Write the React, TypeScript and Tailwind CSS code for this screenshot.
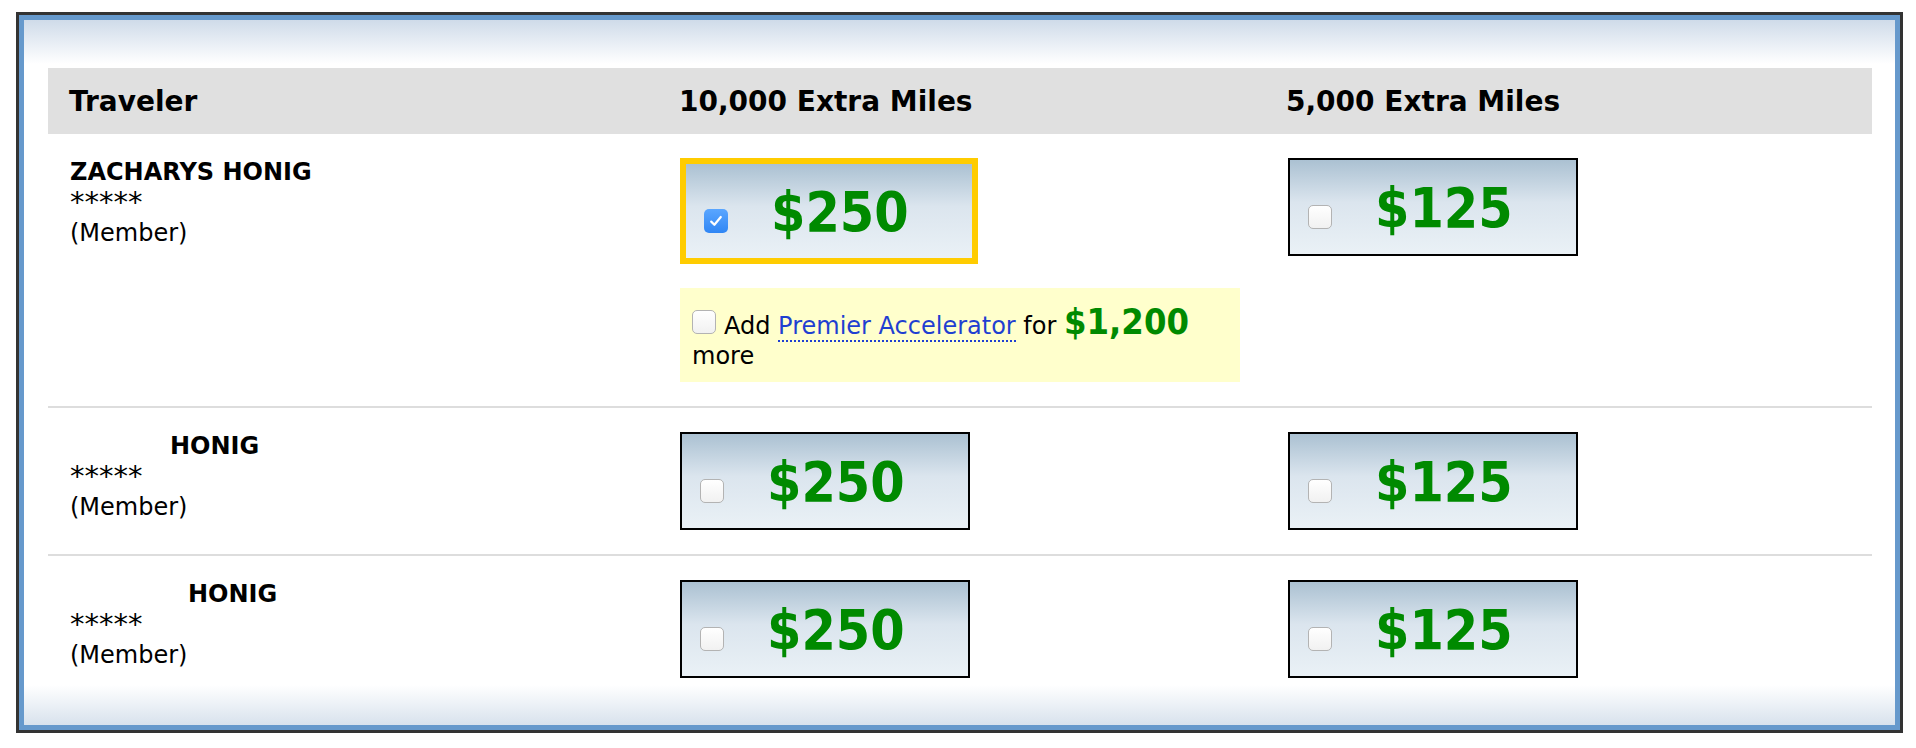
import React from 'react'

type Traveler = {
  name: string
  indent: string
  selected: '10k' | '5k' | null
  accelerator: boolean
}

const travelers: Traveler[] = [
  { name: 'ZACHARYS HONIG', indent: '', selected: '10k', accelerator: true },
  { name: 'HONIG', indent: 'pl-[100px]', selected: null, accelerator: false },
  { name: 'HONIG', indent: 'pl-[118px]', selected: null, accelerator: false },
]

function Checkbox({ checked }: { checked?: boolean }) {
  if (checked) {
    return (
      <span className="inline-flex items-center justify-center w-[24px] h-[24px] rounded-[5px] bg-linear-to-b from-[#5aa6ff] to-[#2f86f4] shrink-0">
        <svg width="16" height="16" viewBox="0 0 16 16" fill="none">
          <path d="M3.2 8.6 L6.4 11.8 L12.8 4" stroke="white" strokeWidth="2.2" strokeLinecap="round" strokeLinejoin="round" />
        </svg>
      </span>
    )
  }
  return (
    <span className="inline-block w-[24px] h-[24px] rounded-[5px] border border-[#b3b3b3] bg-linear-to-b from-white to-[#f1f1f1] shrink-0" />
  )
}

function PriceBox({ amount, selected }: { amount: string; selected: boolean }) {
  return (
    <div
      className={
        selected
          ? 'box-border w-[298px] h-[106px] border-[6px] border-[#ffcc00] flex items-start pl-[18px] bg-linear-to-b from-[#abc1d2] via-[#dbe5ee] via-45% to-[#eaf1f6]'
          : 'box-border w-[290px] h-[98px] border-2 border-black flex items-start pl-[18px] bg-linear-to-b from-[#abc1d2] via-[#dbe5ee] via-45% to-[#eaf1f6]'
      }
    >
      <span className="mt-[45px]">
        <Checkbox checked={selected} />
      </span>
      <span className="ml-[43px] mt-[22px] text-[55px] leading-[52px] font-bold font-stretch-condensed text-[#008a00]">
        {amount}
      </span>
    </div>
  )
}

export default function App() {
  return (
    <div className="w-[1916px] h-[748px] bg-white pt-[12px] pl-[16px] font-['DejaVu_Sans',sans-serif] text-black">
      <div className="box-border w-[1887px] h-[721px] border-[3px] border-[#333333]">
        <div className="box-border h-full border-[5px] border-[#6699cc] bg-[linear-gradient(to_bottom,#cfdbe9_0px,#ffffff_44px,#ffffff_calc(100%-40px),#d8e2ed_100%)] pt-[48px] pl-[24px] pr-[23px]">
          <div className="grid grid-cols-3 h-[66px] bg-[#e0e0e0] text-[28px] leading-[28px] font-bold">
            <div className="pl-[21px] pt-[20px]">Traveler</div>
            <div className="pl-[23px] pt-[20px]">10,000 Extra Miles</div>
            <div className="pl-[22px] pt-[20px]">5,000 Extra Miles</div>
          </div>

          {travelers.map((t, i) => (
            <div
              key={i}
              className={
                i < travelers.length - 1
                  ? 'grid grid-cols-3 border-b-2 border-[#dddddd]'
                  : 'grid grid-cols-3'
              }
            >
              <div className="pl-[22px] pt-[24px] text-[24px] leading-[28px]">
                <div className="font-bold">
                  <span className={t.indent}>{t.name}</span>
                </div>
                <div className="text-[29px] leading-[28px] mt-[2px]">*****</div>
                <div className="mt-[3px]">(Member)</div>
              </div>

              <div className="pl-[24px] pt-[24px] pb-[24px]">
                <PriceBox amount="$250" selected={t.selected === '10k'} />
                {t.accelerator && (
                  <div className="mt-[24px] w-[560px] bg-[#ffffcc] pt-[22px] pb-[11px] px-[12px] text-[24px] leading-[30px]">
                    <span className="inline-block align-baseline mr-[8px]">
                      <Checkbox />
                    </span>
                    Add{' '}
                    <span className="text-[#1f3fd1] border-b-2 border-dotted border-[#1f3fd1]">Premier Accelerator</span>{' '}
                    for{' '}
                    <span className="text-[36px] leading-[20px] font-bold font-stretch-condensed text-[#008a00]">$1,200</span>
                    <br />
                    more
                  </div>
                )}
              </div>

              <div className="pl-[24px] pt-[24px] pb-[24px]">
                <PriceBox amount="$125" selected={t.selected === '5k'} />
              </div>
            </div>
          ))}
        </div>
      </div>
    </div>
  )
}
